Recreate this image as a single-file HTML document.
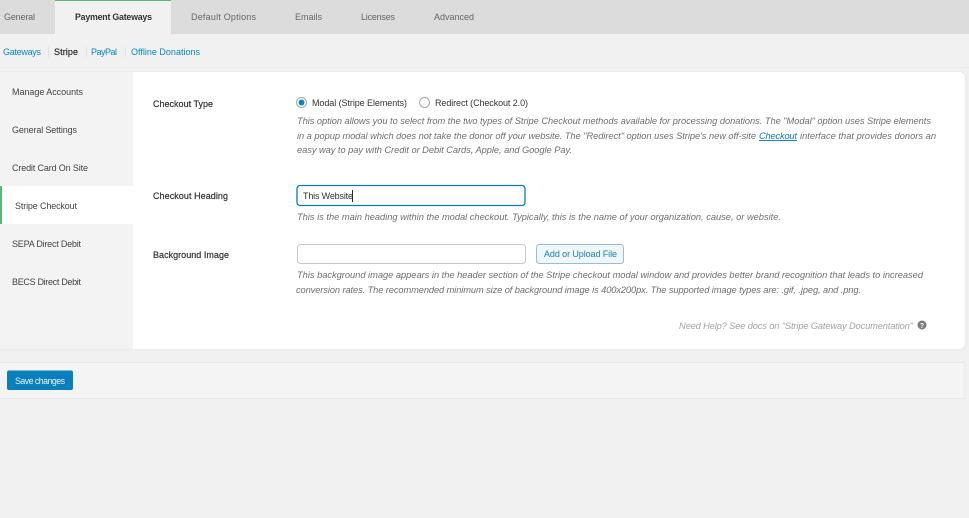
<!DOCTYPE html>
<html><head><meta charset="utf-8"><style>
html,body{margin:0;padding:0;background:#f1f1f1;width:969px;height:518px;overflow:hidden}
svg{display:block;filter:blur(.25px)}
text{font-family:"Liberation Sans",sans-serif;font-size:9px;fill:#444}
.tab{fill:#666}
.b{fill:#333;stroke:#333;stroke-width:.2}
.lnk{fill:#0a85bd}
.i{font-style:italic;fill:#6e6e6e;font-size:9.3px}
</style></head><body>
<svg width="969" height="518" viewBox="0 0 969 518" xmlns="http://www.w3.org/2000/svg">
<rect width="969" height="518" fill="#f1f1f1"/>
<rect width="969" height="34" fill="#dcdcdc"/>
<rect x="55" y="0" width="116" height="34" fill="#f1f1f1"/>
<rect x="55" y="0" width="116" height="1" fill="#5cb870"/>
<text class="tab" x="4" y="20" textLength="31">General</text>
<text x="75" y="20" textLength="77" style="font-size:8.800px;font-weight:700;fill:#333">Payment Gateways</text>
<text class="tab" x="191" y="20" textLength="65">Default Options</text>
<text class="tab" x="295" y="20" textLength="27">Emails</text>
<text class="tab" x="361" y="20" textLength="34">Licenses</text>
<text class="tab" x="434" y="20" textLength="40">Advanced</text>

<text class="lnk" x="3" y="55" textLength="38">Gateways</text>
<rect x="48" y="47" width="1" height="10" fill="#e2e2e2"/>
<text x="54" y="55" textLength="24" style="fill:#222;stroke:#222;stroke-width:.15">Stripe</text>
<rect x="86" y="47" width="1" height="10" fill="#e2e2e2"/>
<text class="lnk" x="91" y="55" textLength="26">PayPal</text>
<rect x="125" y="47" width="1" height="10" fill="#e2e2e2"/>
<text class="lnk" x="131" y="55" textLength="69">Offline Donations</text>
<rect x="0" y="67" width="969" height="1" fill="#ebebeb"/>

<rect x="-8" y="71" width="974.500" height="279.500" rx="6" fill="#ececec"/>
<rect x="-8" y="72" width="973" height="277" rx="6" fill="#fff"/>
<path d="M0 72H133V349H0Z" fill="#f3f3f3"/>
<rect x="0" y="186" width="133" height="38" fill="#fff"/>
<rect x="0" y="186" width="2" height="38" fill="#5cb870"/>
<text x="12" y="95" textLength="71">Manage Accounts</text>
<text x="12" y="133" textLength="65">General Settings</text>
<text x="12" y="171" textLength="76">Credit Card On Site</text>
<text x="15" y="209" textLength="62">Stripe Checkout</text>
<text x="12" y="247" textLength="69">SEPA Direct Debit</text>
<text x="12" y="285" textLength="69">BECS Direct Debit</text>

<text class="b" x="153" y="107" textLength="60">Checkout Type</text>
<text class="b" x="153" y="199" textLength="75">Checkout Heading</text>
<text class="b" x="153" y="258" textLength="76">Background Image</text>

<circle cx="301.500" cy="102.500" r="5" fill="#fff" stroke="#a5a5a5"/>
<circle cx="301.500" cy="102.500" r="3" fill="#0a85bd"/>
<text x="312" y="106" textLength="95" style="fill:#333">Modal (Stripe Elements)</text>
<circle cx="424.500" cy="102.500" r="5" fill="#fff" stroke="#a5a5a5"/>
<text x="435" y="106" textLength="93" style="fill:#333">Redirect (Checkout 2.0)</text>

<text class="i" x="297" y="124" textLength="634">This option allows you to select from the two types of Stripe Checkout methods available for processing donations. The "Modal" option uses Stripe elements</text>
<text class="i" x="297" y="139" textLength="459">in a popup modal which does not take the donor off your website. The "Redirect" option uses Stripe's new off-site</text>
<text class="i" x="759" y="139" textLength="38" text-decoration="underline" style="fill:#0a7cb5">Checkout</text>
<text class="i" x="800" y="139" textLength="136">interface that provides donors an</text>
<text class="i" x="297" y="153" textLength="275">easy way to pay with Credit or Debit Cards, Apple, and Google Pay.</text>

<rect x="297" y="185.500" width="228" height="20" rx="3" fill="#fff" stroke="#0a7cb5" stroke-width="1.300"/>
<text x="303" y="199" textLength="50" style="fill:#333">This Website</text>
<rect x="352" y="190" width="1" height="12" fill="#222"/>
<text class="i" x="297" y="220" textLength="484">This is the main heading within the modal checkout. Typically, this is the name of your organization, cause, or website.</text>

<rect x="297.500" y="244.500" width="228" height="19" rx="3" fill="#fff" stroke="#c8c8c8"/>
<rect x="536.500" y="244.500" width="87" height="19" rx="3" fill="#f0f6f9" stroke="#8fc0d8"/>
<text x="544" y="257" textLength="73" style="fill:#1a7fae">Add or Upload File</text>
<text class="i" x="297" y="278" textLength="626">This background image appears in the header section of the Stripe checkout modal window and provides better brand recognition that leads to increased</text>
<text class="i" x="296" y="293" textLength="565">conversion rates. The recommended minimum size of background image is 400x200px. The supported image types are: .gif, .jpeg, and .png.</text>

<text class="i" x="679" y="329" textLength="234" style="fill:#a3a3a3">Need Help? See docs on "Stripe Gateway Documentation"</text>
<circle cx="922" cy="325" r="4.500" fill="#7a7a7a"/>
<text x="922" y="328" text-anchor="middle" style="font-size:7px;font-weight:700;fill:#fff">?</text>

<rect x="-2" y="362.500" width="967" height="36" fill="#f4f4f4" stroke="#e7e7e7"/>
<rect x="7" y="370.500" width="66" height="19.500" rx="2" fill="#0a7fbd"/>
<text x="15" y="384" textLength="50" style="fill:#e8f3f9;font-size:8.800px">Save changes</text>
</svg>
</body></html>
